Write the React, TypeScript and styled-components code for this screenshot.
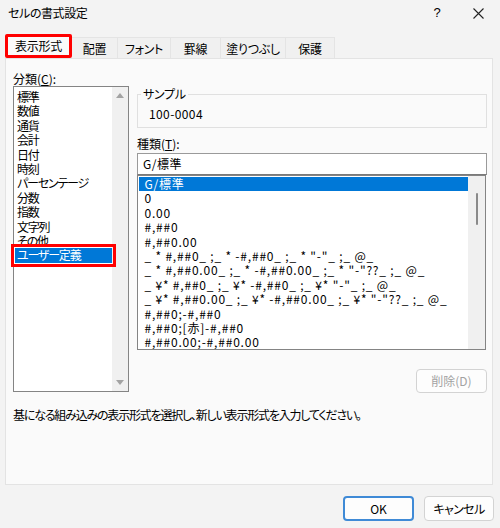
import React from 'react'
import styled, { createGlobalStyle } from 'styled-components'

const GlobalStyle = createGlobalStyle`
    html, body {
        margin: 0;
        padding: 0;
        background: #f3f3f3;
    }
    body {
        font-family: "Noto Sans CJK JP", "Noto Sans", sans-serif;
        font-size: 12px;
        font-feature-settings: "palt";
        color: #000;
    }
`

const Window = styled.div`
    width: 500px;
    height: 528px;
    display: flex;
    flex-direction: column;
    background: #f3f3f3;
    overflow: hidden;
`

const TitleBar = styled.div`
    height: 34px;
    display: flex;
    align-items: flex-start;
    padding: 6px 0 0 8px;
    box-sizing: border-box;
`

const Title = styled.span`
    flex: 1;
    line-height: 14px;
    letter-spacing: -0.4px;
`

const HelpButton = styled.span`
    width: 22px;
    margin-right: 20px;
    text-align: center;
    line-height: 14px;
    font-family: "Liberation Sans", sans-serif;
    font-size: 13px;
`

const CloseButton = styled.span`
    width: 20px;
    height: 14px;
    margin-right: 12px;
    display: flex;
    align-items: center;
    justify-content: center;
`

const TabStrip = styled.div`
    display: flex;
    align-items: flex-end;
    height: 24px;
    padding-left: 5px;
`

const Tab = styled.div<{ $w: number; $active?: boolean }>`
    width: ${(p) => p.$w}px;
    height: ${(p) => (p.$active ? 24 : 21)}px;
    box-sizing: border-box;
    display: flex;
    align-items: center;
    justify-content: center;
    line-height: 14px;
    letter-spacing: -0.3px;
    background: ${(p) => (p.$active ? '#fafafa' : '#f0f0f0')};
    border: ${(p) => (p.$active ? '3px solid #ff0000' : '1px solid #e4e4e4')};
    border-bottom: ${(p) => (p.$active ? '3px solid #ff0000' : 'none')};
    border-left: ${(p) => (p.$active ? '3px solid #ff0000' : 'none')};
    border-radius: ${(p) => (p.$active ? '2px' : '0')};
    padding-top: ${(p) => (p.$active ? 0 : 2)}px;
`

const Panel = styled.div`
    margin-left: 5px;
    width: 488px;
    height: 427px;
    box-sizing: border-box;
    background: #fafafa;
    border: 1px solid #e3e3e3;
    padding: 13px 5px 0 7px;
    display: flex;
    flex-direction: column;
`

const Columns = styled.div`
    display: flex;
    gap: 8px;
`

const LeftColumn = styled.div`
    width: 116px;
    display: flex;
    flex-direction: column;
`

const RightColumn = styled.div`
    width: 350px;
    display: flex;
    flex-direction: column;
`

const Label = styled.div<{ $mt?: number }>`
    line-height: 14px;
    margin-top: ${(p) => p.$mt ?? 0}px;
`

const Underline = styled.span`
    text-decoration: underline;
`

const ListBox = styled.div<{ $h: number; $w?: number }>`
    height: ${(p) => p.$h}px;
    width: ${(p) => (p.$w ? `${p.$w}px` : 'auto')};
    box-sizing: border-box;
    border: 1px solid #848484;
    background: #fff;
    display: flex;
`

const ListItems = styled.div<{ $pt: number }>`
    flex: 1;
    padding: ${(p) => p.$pt}px 0 0 1px;
    min-width: 0;
`

const Item = styled.div<{ $selected?: boolean; $marked?: boolean; $spacing: number }>`
    height: 14.4px;
    line-height: 14.4px;
    padding-left: 2px;
    white-space: pre;
    letter-spacing: ${(p) => p.$spacing}px;
    background: ${(p) => (p.$selected ? '#0078d7' : 'transparent')};
    color: ${(p) => (p.$selected ? '#fff' : '#000')};
    outline: ${(p) => (p.$marked ? '3px solid #ff0000' : 'none')};
    outline-offset: 1px;
    position: relative;
    z-index: ${(p) => (p.$marked ? 2 : 'auto')};
`

const ScrollTrack = styled.div<{ $w: number }>`
    width: ${(p) => p.$w}px;
    background: #f0f0f0;
    display: flex;
    flex-direction: column;
    align-items: center;
`

const Arrow = styled.div<{ $down?: boolean }>`
    width: 0;
    height: 0;
    border-left: 4px solid transparent;
    border-right: 4px solid transparent;
    ${(p) =>
        p.$down
            ? 'border-top: 5px solid #a3a3a3; margin-top: auto; margin-bottom: 6px;'
            : 'border-bottom: 5px solid #a3a3a3; margin-top: 6px;'}
`

const Thumb = styled.div`
    width: 2px;
    height: 32px;
    margin-top: 17px;
    margin-left: 1px;
    background: #8a8a8a;
    border-radius: 1px;
`

const SampleBox = styled.fieldset`
    margin: 15px 0 0;
    padding: 0 0 0 3px;
    border: 1px solid #e0e0e0;
    min-width: 0;
`

const SampleLegend = styled.legend`
    padding: 0 2px;
    line-height: 14px;
    letter-spacing: -0.3px;
`

const SampleValue = styled.div`
    line-height: 14px;
    padding: 6px 0 6px 8px;
    letter-spacing: 0.4px;
`

const TypeInput = styled.div`
    margin-top: 2px;
    height: 22px;
    box-sizing: border-box;
    border: 1px solid #9a9a9a;
    border-bottom-color: #7a7a7a;
    background: #fff;
    line-height: 20px;
    padding-left: 5px;
    letter-spacing: 0.5px;
`

const DeleteRow = styled.div`
    display: flex;
    justify-content: flex-end;
    margin-top: 19px;
`

const Button = styled.div<{ $w: number; $primary?: boolean; $disabled?: boolean }>`
    width: ${(p) => p.$w}px;
    height: ${(p) => (p.$primary ? 25 : 24)}px;
    box-sizing: border-box;
    border: ${(p) => (p.$primary ? '2px solid #3f8ad6' : '1px solid #d3d3d3')};
    border-radius: 4px;
    background: #fdfdfd;
    display: flex;
    align-items: center;
    justify-content: center;
    color: ${(p) => (p.$disabled ? '#a2a2a2' : '#000')};
    line-height: 14px;
`

const CancelButton = styled(Button)`
    height: 25px;
    letter-spacing: -0.6px;
`

const Hint = styled.div`
    margin-top: 15px;
    line-height: 14px;
    letter-spacing: -1.2px;
`

const Footer = styled.div`
    display: flex;
    justify-content: flex-end;
    gap: 10px;
    padding: 11px 6px 0 0;
`

const categories = [
    '標準',
    '数値',
    '通貨',
    '会計',
    '日付',
    '時刻',
    'パーセンテージ',
    '分数',
    '指数',
    '文字列',
    'その他',
    'ユーザー定義',
]

const formats = [
    'G/標準',
    '0',
    '0.00',
    '#,##0',
    '#,##0.00',
    '_ * #,##0_ ;_ * -#,##0_ ;_ * "-"_ ;_ @_',
    '_ * #,##0.00_ ;_ * -#,##0.00_ ;_ * "-"??_ ;_ @_',
    '_ ¥* #,##0_ ;_ ¥* -#,##0_ ;_ ¥* "-"_ ;_ @_',
    '_ ¥* #,##0.00_ ;_ ¥* -#,##0.00_ ;_ ¥* "-"??_ ;_ @_',
    '#,##0;-#,##0',
    '#,##0;[赤]-#,##0',
    '#,##0.00;-#,##0.00',
]

const tabs = [
    { label: '表示形式', width: 67 },
    { label: '配置', width: 46 },
    { label: 'フォント', width: 53 },
    { label: '罫線', width: 50 },
    { label: '塗りつぶし', width: 65 },
    { label: '保護', width: 49 },
]

const App: React.FC = () => {
    return (
        <Window>
            <GlobalStyle />
            <TitleBar>
                <Title>セルの書式設定</Title>
                <HelpButton>?</HelpButton>
                <CloseButton>
                    <svg width="11" height="11" viewBox="0 0 11 11">
                        <path d="M0.5 0.5 L10.5 10.5 M10.5 0.5 L0.5 10.5" stroke="#222" strokeWidth="1.1" />
                    </svg>
                </CloseButton>
            </TitleBar>
            <TabStrip>
                {tabs.map((tab, index) => (
                    <Tab key={tab.label} $w={tab.width} $active={index === 0}>
                        {tab.label}
                    </Tab>
                ))}
            </TabStrip>
            <Panel>
                <Columns>
                    <LeftColumn>
                        <Label>
                            分類(<Underline>C</Underline>):
                        </Label>
                        <ListBox $h={306}>
                            <ListItems $pt={3}>
                                {categories.map((name, index) => (
                                    <Item
                                        key={name}
                                        $spacing={-1.2}
                                        $selected={index === categories.length - 1}
                                        $marked={index === categories.length - 1}
                                    >
                                        {name}
                                    </Item>
                                ))}
                            </ListItems>
                            <ScrollTrack $w={16}>
                                <Arrow />
                                <Arrow $down />
                            </ScrollTrack>
                        </ListBox>
                    </LeftColumn>
                    <RightColumn>
                        <SampleBox>
                            <SampleLegend>サンプル</SampleLegend>
                            <SampleValue>100-0004</SampleValue>
                        </SampleBox>
                        <Label $mt={9}>
                            種類(<Underline>T</Underline>):
                        </Label>
                        <TypeInput>G/標準</TypeInput>
                        <ListBox $h={175} $w={349}>
                            <ListItems $pt={1}>
                                {formats.map((fmt, index) => (
                                    <Item key={fmt} $spacing={0.8} $selected={index === 0}>
                                        {' ' + fmt}
                                    </Item>
                                ))}
                            </ListItems>
                            <ScrollTrack $w={17}>
                                <Thumb />
                            </ScrollTrack>
                        </ListBox>
                        <DeleteRow>
                            <Button $w={71} $disabled>
                                削除(D)
                            </Button>
                        </DeleteRow>
                    </RightColumn>
                </Columns>
                <Hint>基になる組み込みの表示形式を選択し、新しい表示形式を入力してください。</Hint>
            </Panel>
            <Footer>
                <Button $w={71} $primary>
                    OK
                </Button>
                <CancelButton $w={70}>キャンセル</CancelButton>
            </Footer>
        </Window>
    )
}

export default App
